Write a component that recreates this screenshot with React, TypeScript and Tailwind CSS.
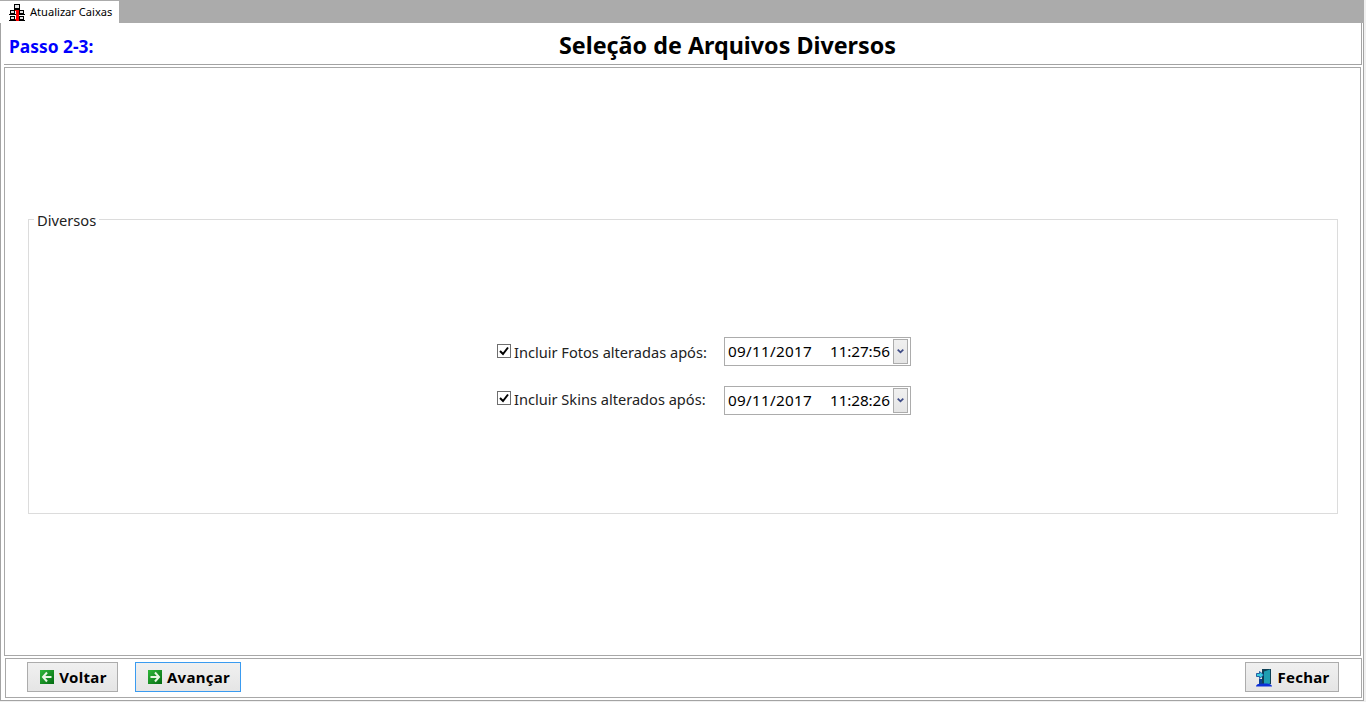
import React from "react";

const Network = () => (
  <svg width="18" height="18" viewBox="0 0 18 18" className="shrink-0">
    <g fill="#e4e4e4" stroke="#000" strokeWidth="1" shapeRendering="crispEdges">
      <rect x="6.5" y="1.5" width="5" height="4" />
      <rect x="2.5" y="7.5" width="4" height="3" />
      <rect x="11.5" y="7.5" width="4" height="3" />
      <rect x="2.5" y="13.5" width="4" height="3" />
      <rect x="11.5" y="13.5" width="4" height="3" />
    </g>
    <path d="M1 11.5h7M10 11.5h7M1 17.5h7M10 17.5h7M6 6.5h6" stroke="#000" shapeRendering="crispEdges" />
    <path d="M7 7.5h4M8 7h2v10H8zM7 16.5h4" fill="#f00" stroke="#f00" strokeWidth="1" shapeRendering="crispEdges" />
  </svg>
);

const ArrowIcon = ({ dir }: { dir: "left" | "right" }) => (
  <svg width="14" height="14" viewBox="0 0 14 14" className="shrink-0">
    <defs>
      <linearGradient id={`g-${dir}`} x1="0" y1="0" x2="1" y2="1">
        <stop offset="0" stopColor="#2fb83a" />
        <stop offset="1" stopColor="#046b12" />
      </linearGradient>
    </defs>
    <rect width="14" height="14" fill={`url(#g-${dir})`} />
    {dir === "left" ? (
      <path d="M7 2.5 3 7l4 4.5M3.5 7H11.5" fill="none" stroke="#e8f5e4" strokeWidth="2" />
    ) : (
      <path d="M7 2.5 11 7l-4 4.5M10.5 7H2.5" fill="none" stroke="#e8f5e4" strokeWidth="2" />
    )}
  </svg>
);

const DoorIcon = () => (
  <svg width="16" height="19" viewBox="0 0 16 19" className="shrink-0">
    <path d="M6 1h9v15H6z" fill="#0e3f55" />
    <path d="M8 3.5 14 1.5v14l-6 2z" fill="#1f9fb2" />
    <path d="M0.5 5.5h3V3.5L8 7l-4.5 3.5v-2h-3z" fill="#38cfe0" stroke="#0b3f90" strokeWidth="0.8" />
    <path d="M0 18.5c0-2 2-3 6-3h4c3 0 6 1 6 3z" fill="#0c2fd8" />
    <path d="M3 11h3v5H3z" fill="#0a3f90" />
  </svg>
);

const Btn = ({ label, icon, className }: { label: string; icon: React.ReactNode; className: string }) => (
  <button
    className={`h-[30px] flex items-center justify-center gap-[5px] pl-[2px] border bg-gradient-to-b from-[#f0f0f0] to-[#e5e5e5] text-[15px] font-bold text-black tracking-[0.3px] ${className}`}
  >
    {icon}
    <span>{label}</span>
  </button>
);

const Row = ({ label, date, time, lift }: { label: string; date: string; time: string; lift: string }) => (
  <div className="flex items-center h-[29px]">
    <div className={`flex items-center ${lift}`}>
      <span className="w-[14px] h-[14px] border border-[#6e6e6e] bg-white flex items-center justify-center shrink-0">
        <svg width="10" height="10" viewBox="0 0 10 10">
          <path d="M1 5l3 3 5-6.5" fill="none" stroke="#000" strokeWidth="2" />
        </svg>
      </span>
      <span className="ml-[3px] mt-[2px] w-[210px] text-[14.6px] text-[#222] leading-none">{label}</span>
    </div>
    <div className="w-[187px] h-[29px] border border-[#acacac] flex items-center pl-[3px] pr-[2px] bg-white">
      <span className="flex-1 flex text-[15.3px] text-black leading-none whitespace-pre">
        <span className="w-[102px] tracking-[0.25px]">{date}</span>
        <span className="tracking-[-0.1px]">{time}</span>
      </span>
      <span className="w-[15px] h-[25px] border border-[#acacac] bg-gradient-to-b from-[#f0f0f0] to-[#e5e5e5] flex items-center justify-center">
        <svg width="7" height="5" viewBox="0 0 7 5">
          <path d="M0.7 0.7 3.5 3.3 6.3 0.7" fill="none" stroke="#3f4c86" strokeWidth="1.8" />
        </svg>
      </span>
    </div>
  </div>
);

export default function App() {
  return (
    <div className="w-[1366px] h-[702px] overflow-hidden bg-[#f0f0f0] flex flex-col font-['Noto_Sans','Open_Sans',sans-serif]">
      <div className="h-[23px] w-[1364px] bg-[#ababab] shrink-0 flex items-end">
        <div className="w-[119px] h-[22px] bg-white flex items-center pl-[8px] gap-[4px] text-[11.1px] text-black">
          <Network />
          <span>Atualizar Caixas</span>
        </div>
      </div>
      <div className="w-[1364px] h-[678px] shrink-0 bg-white border-l border-r border-b border-[#a3a3a3] flex flex-col">
        <div className="h-[42px] ml-[3px] mr-[1px] shrink-0 border-b border-r border-[#a3a3a3] flex items-center relative">
          <span className="absolute left-[5px] top-[13px] text-[17.4px] leading-[20px] font-bold text-[#0000ff]">Passo 2-3:</span>
          <span className="w-full text-center text-[23.3px] leading-[28px] font-bold text-black pt-[2px] pl-[90px]">Seleção de Arquivos Diversos</span>
        </div>
        <div className="h-[589px] ml-[3px] mr-[2px] mt-[2px] shrink-0 border border-[#a8a8a8] pl-[23px] pr-[22px] pt-[151px]">
          <div className="h-[295px] border border-[#dcdcdc] relative flex flex-col items-center pt-[117px]">
            <span className="absolute left-[5px] -top-[10px] bg-white px-[3px] text-[14.7px] leading-[20px] text-[#222]">Diversos</span>
            <div className="flex flex-col gap-[20px] ml-[42px]">
              <Row label="Incluir Fotos alteradas após:" date="09/11/2017" time="11:27:56" lift="mb-[1px]" />
              <Row label="Incluir Skins alterados após:" date="09/11/2017" time="11:28:26" lift="mb-[5px]" />
            </div>
          </div>
        </div>
        <div className="h-[40px] ml-[4px] mr-[1px] mt-[2px] shrink-0 border border-[#a8a8a8] flex items-start pt-[3px] pl-[21px] pr-[22px]">
          <Btn label="Voltar" icon={<ArrowIcon dir="left" />} className="w-[91px] border-[#acacac]" />
          <Btn label="Avançar" icon={<ArrowIcon dir="right" />} className="w-[106px] ml-[17px] border-[#3a9bf0]" />
          <div className="flex-1" />
          <Btn label="Fechar" icon={<DoorIcon />} className="w-[94px] border-[#acacac]" />
        </div>
      </div>
    </div>
  );
}
